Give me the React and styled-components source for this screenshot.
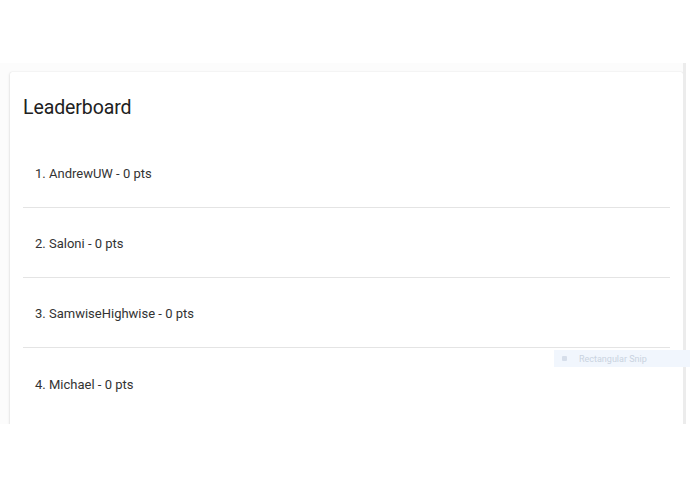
import React from 'react';
import styled, { createGlobalStyle } from 'styled-components';

const players = [
  { name: 'AndrewUW', pts: 0 },
  { name: 'Saloni', pts: 0 },
  { name: 'SamwiseHighwise', pts: 0 },
  { name: 'Michael', pts: 0 },
];

const App = () => {
  return (
    <>
      <GlobalStyle />
      <Page>
        <Viewport>
          <Card>
            <Title>Leaderboard</Title>
            <List>
              {players.map((p, i) => (
                <Row key={p.name}>
                  {i + 1}. {p.name} - {p.pts} pts
                </Row>
              ))}
            </List>
          </Card>
        </Viewport>
        <SnipHint>
          <SnipIcon />
          Rectangular Snip
        </SnipHint>
      </Page>
    </>
  );
};

export default App;

//----- Styled Components------
const GlobalStyle = createGlobalStyle`
  html, body {
    margin: 0;
    padding: 0;
    background: #fff;
    font-family: Roboto, "Liberation Sans", sans-serif;
  }
`;

const Page = styled.div`
  position: relative;
  width: 695px;
  height: 494px;
  background: #fff;
  padding-top: 63px;
  box-sizing: border-box;
`;

const Viewport = styled.div`
  height: 361px;
  overflow: hidden;
  padding: 9px 0 0 10px;
  box-sizing: border-box;
  background: #fcfcfc;
  border-right: 3px solid #ececec;
  width: 686px;
`;

const Card = styled.div`
  background: #fff;
  border-radius: 2px;
  box-shadow: 0 1px 3px rgba(0, 0, 0, 0.16), 0 0 1px rgba(0, 0, 0, 0.14);
  padding: 14px 13px 0 13px;
  height: 600px;
`;

const Title = styled.h2`
  margin: 0;
  font-size: 19.5px;
  font-weight: 400;
  line-height: 24px;
  color: #212121;
  letter-spacing: -0.1px;
  padding-top: 10px;
`;

const List = styled.div`
  margin-top: 18px;
`;

const Row = styled.div`
  height: 70px;
  display: flex;
  align-items: center;
  padding: 2px 0 0 12px;
  font-size: 13px;
  color: #333;
  border-bottom: 1px solid #e4e4e4;
  box-sizing: border-box;

  &:last-child {
    border-bottom: none;
  }
`;

const SnipHint = styled.div`
  position: absolute;
  left: 554px;
  top: 350px;
  width: 136px;
  height: 17px;
  display: flex;
  align-items: center;
  gap: 12px;
  padding-left: 8px;
  box-sizing: border-box;
  background: #f1f6fd;
  color: #c9d3e0;
  font-size: 9px;
`;

const SnipIcon = styled.span`
  width: 5px;
  height: 5px;
  border-radius: 1px;
  background: #d6deea;
`;
